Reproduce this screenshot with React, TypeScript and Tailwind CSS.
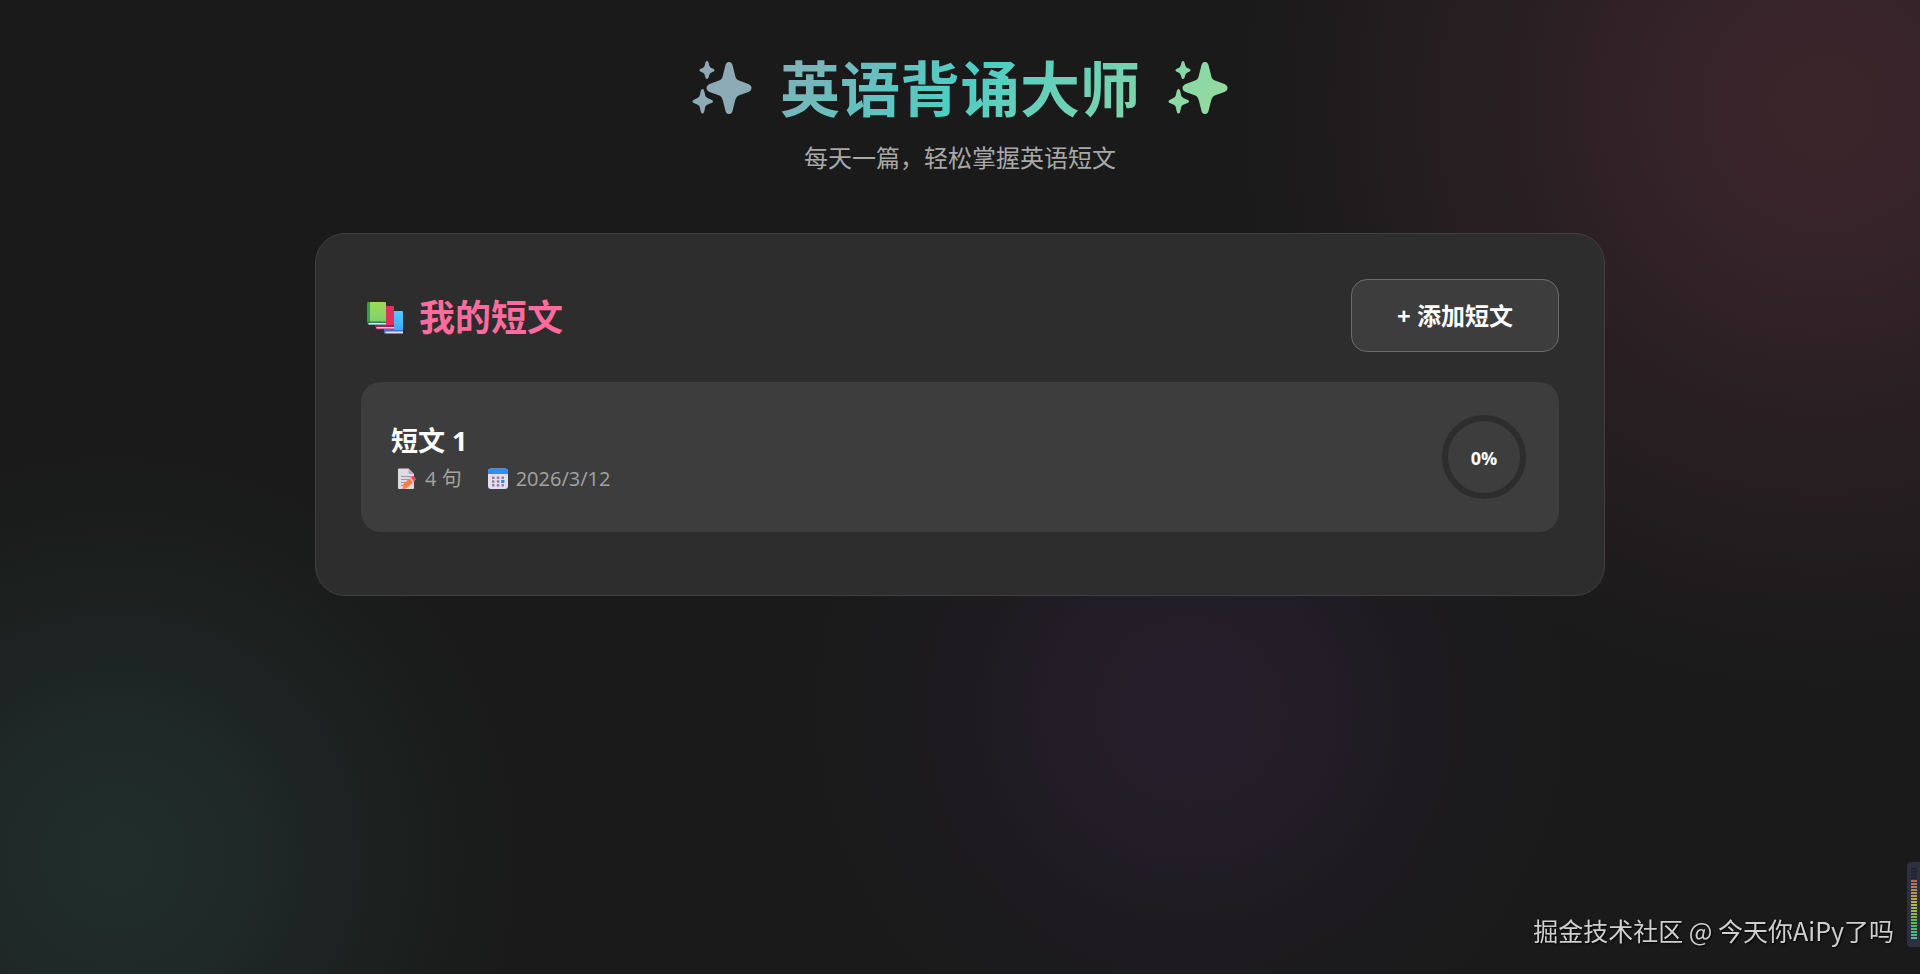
type SparklesProps = { id: string; from: string; to: string };

function Sparkles({ id, from, to }: SparklesProps) {
  return (
    <svg viewBox="0 0 60 60" className="size-15 shrink-0" fill={`url(#${id})`} aria-hidden="true">
      <defs>
        <linearGradient id={id} gradientUnits="userSpaceOnUse" x1="0" y1="0" x2="60" y2="60">
          <stop offset="0" stopColor={from} />
          <stop offset="1" stopColor={to} />
        </linearGradient>
      </defs>
      <path d="M37 3C39.500 3 40.500 5 41 8L43 16C43.500 19 44.500 20.500 47 21.500L55 24.500C58 25.500 59.500 27 59.500 29C59.500 31 58 32.500 55 33.500L48 36C45 37 44 38.500 43 42L41 50C40.500 53 39.500 55 37 55C34.500 55 33.500 53 33 50L31 42C30 38.500 29 37 26 36L19 33.500C16 32.500 14.500 31 14.500 29C14.500 27 16 25.500 19 24.500L27 21.500C29.500 20.500 30.500 19 31 16L33 8C33.500 5 34.500 3 37 3Z" />
      <path d="M15 2C16.200 2 16.500 3 17 5.500C17.500 7.500 18 8.500 20 9.300C22 10 22.500 10.500 22.500 11.200C22.500 12 22 12.500 20 13.200C18 14 17.500 15 17 17C16.500 19 16.200 20 15 20C13.800 20 13.500 19 13 17C12.500 15 12 14 10 13.200C8 12.500 7.500 12 7.500 11.200C7.500 10.500 8 10 10 9.300C12 8.500 12.500 7.500 13 5.500C13.500 3 13.800 2 15 2Z" />
      <path d="M10.500 30C11.800 30 12.200 31.500 12.800 34.500C13.300 37.500 14 38.500 17 39.800C20 41 21 41.500 21 42.500C21 43.500 20 44 17 45C14 46 13.300 47 12.800 50C12.200 53 11.800 54.500 10.500 54.500C9.200 54.500 8.800 53 8.200 50C7.700 47 7 46 4 45C1.500 44 .500 43.500 .500 42.500C.500 41.500 1.500 41 4 39.800C7 38.500 7.700 37.500 8.200 34.500C8.800 31.500 9.200 30 10.500 30Z" />
    </svg>
  );
}

function BooksIcon() {
  return (
    <svg viewBox="0 0 36 36" className="size-9 shrink-0" aria-hidden="true">
      <defs>
        <linearGradient id="book-green" x1="0" y1="0" x2="0" y2="1">
          <stop offset="0" stopColor="#9bdc54" />
          <stop offset="1" stopColor="#7ed070" />
        </linearGradient>
        <linearGradient id="book-blue" x1="0" y1="0" x2="0" y2="1">
          <stop offset="0" stopColor="#5cc6fa" />
          <stop offset="1" stopColor="#3fa6ee" />
        </linearGradient>
      </defs>
      <path d="M17 11h18a1 1 0 0 1 1 1v21H17z" fill="url(#book-blue)" />
      <path d="M17 30h19v4H18.500a1.500 1.500 0 0 1-1.500-1.500z" fill="#3d6fd0" />
      <path d="M18.500 31.500H36v1.700H18.500z" fill="#e4dcff" />
      <path d="M8.500 6H26a1 1 0 0 1 1 1v20H8.500z" fill="#df2f5f" />
      <path d="M8.500 25H27v4.500H10a1.500 1.500 0 0 1-1.500-1.500z" fill="#a51f58" />
      <path d="M9.500 27H27v1.500H9.500z" fill="#f0d8f5" />
      <path d="M1.500 2H18a1 1 0 0 1 1 1v19H.500V3a1 1 0 0 1 1-1z" fill="url(#book-green)" />
      <path d="M.500 3a1 1 0 0 1 1-1H3v21H.500z" fill="#3f9a4c" />
      <path d="M.500 21.500H19V25H2a1.500 1.500 0 0 1-1.500-1.500z" fill="#2f7a55" />
      <path d="M1.500 23H19v1.500H1.500z" fill="#e6e0f7" />
    </svg>
  );
}

function MemoIcon() {
  return (
    <svg viewBox="0 0 20 22" width="20" height="22" className="shrink-0" aria-hidden="true">
      <path d="M2 .500h9.500L17 6v14a1 1 0 0 1-1 1H2a1 1 0 0 1-1-1V1.500a1 1 0 0 1 1-1z" fill="#e0d9e4" />
      <path d="M11.500.500 17 6h-4.500a1 1 0 0 1-1-1z" fill="#b8adc0" />
      <path d="M4 8.500h10M4 11.500h10M4 14.500h7M4 17.500h3" stroke="#9d95a6" strokeWidth="1" />
      <path d="m6.500 16 7-6.500 3.500 4-7 6.500-4.500 1z" fill="#ff7d3c" />
      <path d="m13.500 9.500 1.200-1c.900-.800 2-.600 2.800.300l.800.900c.800 1 .700 2-.100 2.700l-1.200 1.100z" fill="#f2475c" />
      <path d="m12.500 10.400 1-.900 3.500 4-1 .900z" fill="#d9c9e6" />
      <path d="m6.500 16 3.500 4-4.500 1z" fill="#ff8a45" />
    </svg>
  );
}

function CalendarIcon() {
  return (
    <svg viewBox="0 0 20 22" width="20" height="22" className="shrink-0" aria-hidden="true">
      <rect x="0" y=".500" width="20" height="20.500" rx="3" fill="#e6dcf5" />
      <path d="M0 6V3.500a3 3 0 0 1 3-3h14a3 3 0 0 1 3 3V6z" fill="#2f8df5" />
      <g fill="#8b7f9c">
        <rect x="4" y="8.500" width="2.500" height="2.500" rx=".5" />
        <rect x="8.800" y="8.500" width="2.500" height="2.500" rx=".5" />
        <rect x="13.500" y="8.500" width="2.500" height="2.500" rx=".5" />
        <rect x="4" y="12.300" width="2.500" height="2.500" rx=".5" />
        <rect x="8.800" y="12.300" width="2.500" height="2.500" rx=".5" />
        <rect x="4" y="16" width="2.500" height="2.500" rx=".5" />
        <rect x="8.800" y="16" width="2.500" height="2.500" rx=".5" />
        <rect x="13.500" y="16" width="2.500" height="2.500" rx=".5" />
      </g>
      <rect x="13.200" y="12" width="3.200" height="3" rx=".5" fill="#1590e8" />
    </svg>
  );
}

function ProgressRing({ percent }: { percent: number }) {
  const length = 2 * Math.PI * 39;
  return (
    <div
      className="relative grid size-[90px] shrink-0 place-items-center"
      role="progressbar"
      aria-label="背诵进度"
      aria-valuenow={percent}
      aria-valuemin={0}
      aria-valuemax={100}
    >
      <svg viewBox="0 0 90 90" className="absolute inset-0 size-full -rotate-90" fill="none" strokeWidth="6" aria-hidden="true">
        <circle cx="45" cy="45" r="39" stroke="#2d2d2d" />
        {percent > 0 && (
          <circle cx="45" cy="45" r="39" stroke="#4ecdc4" strokeDasharray={length} strokeDashoffset={length * (1 - percent / 100)} />
        )}
      </svg>
      <span className="relative pt-0.5 text-lg leading-6 font-bold text-white">{percent}%</span>
    </div>
  );
}

function LevelMeter() {
  const bars = Array.from({ length: 20 }, (_, i) => i);
  return (
    <div className="fixed right-0 bottom-[27px] flex h-[85px] w-[13px] flex-col items-center gap-px rounded-l-sm bg-[#2c3042] pt-[6px]" aria-hidden="true">
      {[0, 1, 2, 3].map((i) => (
        <div key={i} className="h-[2px] w-[6px] shrink-0 bg-[#20242f]" />
      ))}
      {bars.map((i) => (
        <div
          key={i}
          className="h-[2px] w-[6px] shrink-0"
          style={{ backgroundColor: `hsl(${i < 10 ? 14 + i * 6 : 74 + (i - 10) * 10} 42% 52%)` }}
        />
      ))}
    </div>
  );
}

const articles = [{ title: "短文 1", sentences: 4, date: "2026/3/12", percent: 0 }];

export default function App() {
  return (
    <div className="min-h-screen bg-[#1a1a1a] bg-[radial-gradient(circle_580px_at_95%_11%,#3a252a_0%,#37242a_20%,#291f22_55%,#1a1a1a00_100%),radial-gradient(circle_400px_at_6%_88%,#202d2b_0%,#1f2a28_30%,#1c2120_65%,#1a1a1a00_100%),radial-gradient(circle_380px_at_62%_73%,#261e2b_0%,#231d28_30%,#1d1b1f_62%,#1a1a1a00_100%)] font-['Open_Sans','Noto_Sans_CJK_SC',sans-serif] text-white">
      <main className="mx-auto w-full max-w-[1290px] pt-11">
        <header className="flex flex-col items-center">
          <h1 className="flex w-full items-center justify-center gap-7 bg-[linear-gradient(135deg,#ff6b9d,#4ecdc4,#ffe66d)] bg-clip-text text-[60px] leading-[90px] font-bold text-transparent">
            <Sparkles id="sparkles-left" from="#93a8b6" to="#86adb7" />
            <span>英语背诵大师</span>
            <Sparkles id="sparkles-right" from="#81d7ab" to="#9bdb9c" />
          </h1>
          <p className="mt-1.5 text-2xl leading-9 text-[#a8a8a8]">每天一篇，轻松掌握英语短文</p>
        </header>

        <section className="mt-[57px] rounded-[30px] border border-[#404040] bg-[#2d2d2d] px-[45px] pt-[45px] pb-[63px]">
          <div className="flex items-center justify-between">
            <h2 className="flex items-center gap-4 pt-1 pl-1.5 text-4xl leading-[54px] font-bold text-[#ff6b9d]">
              <BooksIcon />
              我的短文
            </h2>
            <button type="button" className="h-[73px] rounded-2xl border border-[#6b6b6b] bg-[#3d3d3d] px-[45px] text-2xl font-bold text-white">
              + 添加短文
            </button>
          </div>

          <ul className="mt-[30px] flex flex-col gap-5">
            {articles.map((article) => (
              <li key={article.title} className="flex items-center justify-between rounded-[20px] bg-[#3d3d3d] p-[30px]">
                <div className="pt-1">
                  <h3 className="text-[27px] leading-10 font-bold">{article.title}</h3>
                  <div className="flex items-center gap-[26px] pl-1.5 text-[20px] leading-9 text-[#a3a3a3]">
                    <span className="flex items-center gap-2">
                      <MemoIcon />
                      {article.sentences} 句
                    </span>
                    <span className="flex items-center gap-2">
                      <CalendarIcon />
                      {article.date}
                    </span>
                  </div>
                </div>
                <ProgressRing percent={article.percent} />
              </li>
            ))}
          </ul>
        </section>
      </main>

      <p className="fixed right-[26px] bottom-[26px] font-['Noto_Sans_CJK_SC',sans-serif] text-[25px] leading-9 text-[#cfcfcf] [text-shadow:1px_1px_2px_#000]">
        掘金技术社区 @ 今天你AiPy了吗
      </p>
      <LevelMeter />
    </div>
  );
}
